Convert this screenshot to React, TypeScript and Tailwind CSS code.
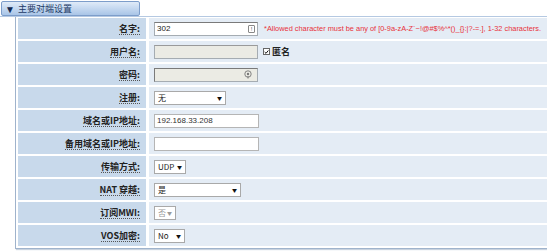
import React from 'react';

const cjk = { fontFamily: '"Noto Sans CJK SC", "Liberation Sans", sans-serif' };
const latin = { fontFamily: '"Liberation Sans", "Noto Sans CJK SC", sans-serif' };

function Row({ label, children }: { label: string; children?: React.ReactNode }) {
  return (
    <div className="flex h-[21px] mb-[2px]">
      <div className="w-[128px] shrink-0 bg-[#c8d9eb] flex items-center justify-end pr-[6px]">
        <span className="text-[9px] font-bold text-[#222] border-b border-dotted border-[#555] leading-[11px]" style={cjk}>
          {label}:
        </span>
      </div>
      <div className="ml-[3px] flex-1 bg-[#e4ecf5] flex items-center pl-[5px]">{children}</div>
    </div>
  );
}

function Select({ value, w, disabled }: { value: string; w: string; disabled?: boolean }) {
  return (
    <div
      className={`${w} h-[14px] border border-[#a9a9a9] bg-white flex items-center justify-between px-[3px] text-[8px] ${disabled ? 'text-[#999]' : 'text-[#222]'}`}
      style={cjk}
    >
      <span>{value}</span>
      <span className={`text-[5px] ${disabled ? 'text-[#999]' : 'text-[#111]'}`}>▼</span>
    </div>
  );
}

export default function App() {
  return (
    <div className="w-[547px] h-[251px] bg-white overflow-hidden relative">
      <div className="border-b border-[#b5c9e2] h-[17px] pt-[1px] pl-[1px]">
        <div className="w-[139px] h-[15px] rounded-[2px] border border-[#7d9dca] bg-gradient-to-b from-[#e0ebf8] to-[#a9c5e7] flex items-center pl-[3px] gap-[3px]">
          <span className="text-[10px] text-[#13294f] leading-none">▼</span>
          <span className="text-[9px] text-[#1d3a66] leading-none" style={cjk}>主要对端设置</span>
        </div>
      </div>
      <div className="ml-[15px] border-l border-b border-[#9fb3cc] pl-[2px] pt-[1px] shadow-[1px_1px_1px_#c9d3df]">
        <Row label="名字">
          <div className="w-[104px] h-[14px] border border-[#a5acb2] border-t-[#7a7a7a] bg-white flex items-center justify-between pl-[2px] pr-[2px] text-[8px] text-[#222]" style={latin}>
            <span>302</span>
            <span className="w-[7px] h-[8px] border border-[#888] rounded-[1px] text-[6px] leading-[6px] text-center text-[#555]">!</span>
          </div>
          <span className="ml-[6px] text-[7.4px] text-[#e8313a] whitespace-nowrap" style={latin}>
            *Allowed character must be any of [0-9a-zA-Z`~!@#$%^*()_{'{}'}:|?-=.], 1-32 characters.
          </span>
        </Row>
        <Row label="用户名">
          <div className="w-[104px] h-[14px] border border-[#a5acb2] border-t-[#9a9a9a] bg-[#ebebe4]" />
          <span className="ml-[5px] w-[7px] h-[7px] border border-[#666] bg-white flex items-center justify-center">
            <svg width="6" height="6" viewBox="0 0 6 6">
              <path d="M0.8 3 L2.4 4.6 L5.2 1.2" stroke="#111" strokeWidth="1.2" fill="none" />
            </svg>
          </span>
          <span className="ml-[2px] text-[9px] font-bold text-[#222]" style={cjk}>匿名</span>
        </Row>
        <Row label="密码">
          <div className="w-[104px] h-[14px] border border-[#a5acb2] border-t-[#7a7a7a] border-l-[#7a7a7a] bg-[#ebebe4] flex items-center justify-end pr-[5px]">
            <svg width="8" height="9" viewBox="0 0 8 9">
              <circle cx="4" cy="4" r="3.2" stroke="#777" strokeWidth="0.9" fill="none" />
              <circle cx="4" cy="4" r="1.2" fill="#777" />
              <path d="M4 6 L4 8.6" stroke="#777" strokeWidth="0.9" />
            </svg>
          </div>
        </Row>
        <Row label="注册">
          <Select value="无" w="w-[72px]" />
        </Row>
        <Row label="域名或IP地址">
          <div className="w-[105px] h-[14px] border border-[#b5b5b5] bg-white flex items-center pl-[2px] text-[8px] text-[#333]" style={latin}>
            192.168.33.208
          </div>
        </Row>
        <Row label="备用域名或IP地址">
          <div className="w-[105px] h-[14px] border border-[#b5b5b5] bg-white" />
        </Row>
        <Row label="传输方式">
          <Select value="UDP" w="w-[32px]" />
        </Row>
        <Row label="NAT 穿越">
          <Select value="是" w="w-[87px]" />
        </Row>
        <Row label="订阅MWI">
          <Select value="否" w="w-[22px]" disabled />
        </Row>
        <Row label="VOS加密">
          <Select value="No" w="w-[31px]" />
        </Row>
      </div>
    </div>
  );
}
